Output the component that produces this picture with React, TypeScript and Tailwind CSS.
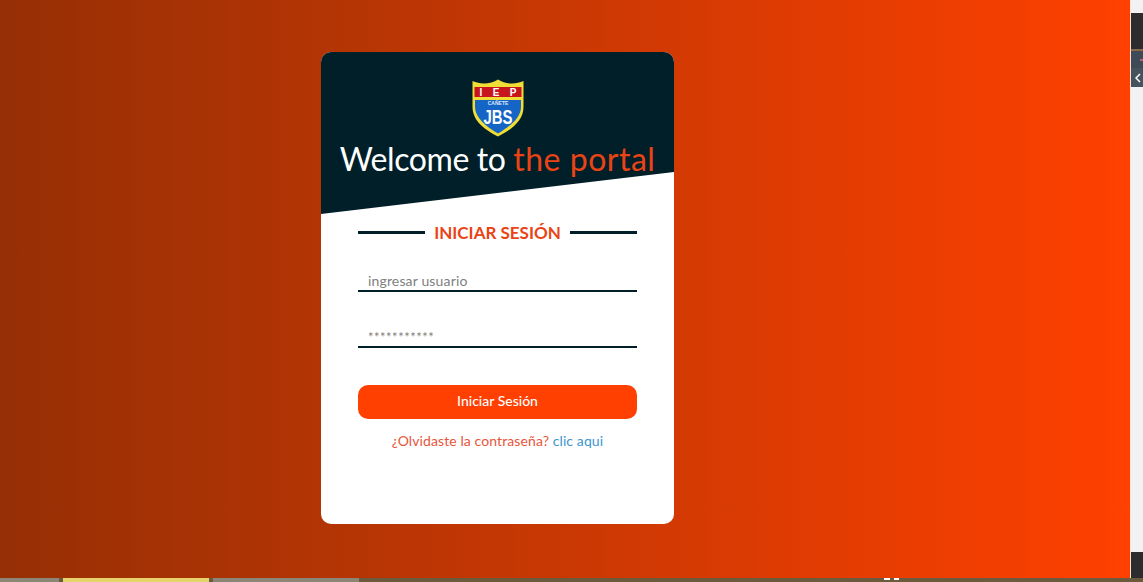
const FONT = "font-['Lato','Noto_Sans',sans-serif]";

const Shield = () => (
  <svg viewBox="0 0 54 58" className="w-[54px] h-[58px]">
    <path
      d="M27 0.500 C31 3 36 4.500 41 4.500 C45 4.500 49 3.500 52.500 2 L52.500 28 C52.500 42 40 51 27 57.500 C14 51 1.500 42 1.500 28 L1.500 2 C5 3.500 9 4.500 13 4.500 C18 4.500 23 3 27 0.500 Z"
      fill="#f0dd36"
    />
    <path d="M3.500 8 H50.500 V18 H3.500 Z" fill="#c8141c" />
    <path d="M4 21 H50 V28 C50 39 38 48 27 54.500 C16 48 4 39 4 28 Z" fill="#1565c6" />
    <text x="27" y="17" textAnchor="middle" fontSize="10" fontWeight="700" fill="#fff" fontFamily="Liberation Sans" textLength="37" lengthAdjust="spacing">
      IEP
    </text>
    <text x="27" y="25.500" textAnchor="middle" fontSize="5" fontWeight="700" fill="#dbe8ff" fontFamily="Liberation Sans">
      CAÑETE
    </text>
    <text
      textAnchor="middle"
      fontSize="16"
      fontWeight="700"
      fill="#fff"
      fontFamily="Liberation Sans"
      transform="translate(27 45) scale(1 1.250)"
      textLength="29"
      lengthAdjust="spacingAndGlyphs"
    >
      JBS
    </text>
  </svg>
);

export default function App() {
  return (
    <div className={`${FONT} h-[582px] w-[1143px] overflow-hidden flex flex-col bg-[#6b5b3c]`}>
      <div className="flex h-[578px]">
        {/* Page */}
        <main className="w-[1130px] bg-gradient-to-r from-[#962f05] to-[#ff4000] pt-[52px] pl-[321px]">
          <div className="w-[353px] h-[472px] rounded-[10px] bg-white overflow-hidden">
            <header className="h-[162px] bg-[#001f29] pt-[27px] flex flex-col items-center [clip-path:polygon(0_0,100%_0,100%_74%,0_100%)]">
              <Shield />
              <h1 className="mt-[3px] text-[32px] leading-[38px] tracking-[-0.4px] text-white whitespace-nowrap">
                Welcome to <span className="tracking-[0.5px] text-[#ea4315]">the portal</span>
              </h1>
            </header>

            <div className="px-[37px] pt-[6px]">
              <div className="flex items-center gap-[9px] h-[24px]">
                <div className="flex-1 h-[3px] bg-[#001f29]" />
                <h2 className="pt-[1px] text-[17px] leading-[24px] font-bold text-[#ea4315] whitespace-nowrap">INICIAR SESIÓN</h2>
                <div className="flex-1 h-[3px] bg-[#001f29]" />
              </div>

              <div className="mt-[27px] h-[21px] border-b-2 border-[#001f29] pl-[10px] text-[14px] leading-[20px] tracking-[0.15px] text-[#808080]">
                ingresar usuario
              </div>
              <div className="mt-[35px] h-[21px] border-b-2 border-[#001f29] pl-[10px] text-[13px] leading-[20px] tracking-[0.5px] text-[#808080]">
                ***********
              </div>

              <button className="mt-[37px] block w-full h-[34px] pb-[3px] rounded-[10px] bg-[#ff4000] text-white text-[14px] font-medium">
                Iniciar Sesión
              </button>

              <p className="mt-[13px] text-center text-[14px] leading-[18px] tracking-[0.1px] text-[#e8553a]">
                ¿Olvidaste la contraseña? <a className="text-[#3d94cf]">clic aqui</a>
              </p>
            </div>
          </div>
        </main>

        {/* Cropped neighbouring window */}
        <aside className="w-[13px] flex flex-col bg-[#f2f2f2] border-l border-[#fbe9e0]">
          <div className="h-[13px]" />
          <div className="h-[38px] bg-[#2d2d2d] border-b-2 border-[#8a6a4a]" />
          <div className="h-[17px] bg-[#3e4a55] flex items-center justify-end">
            <div className="w-[3px] h-[2px] bg-[#b0627a]" />
          </div>
          <div className="h-[19px] bg-[#46525c] flex items-center pl-[4px]">
            <svg viewBox="0 0 8 10" className="w-[8px] h-[10px]">
              <path d="M5 1 L1 5 L5 9" fill="none" stroke="#fff" strokeWidth="1.500" />
            </svg>
          </div>
          <div className="flex-1" />
          <div className="h-[26px] bg-[#2d2d2d]" />
        </aside>
      </div>

      {/* Taskbar edge */}
      <footer className="h-[4px] flex gap-[4px]">
        <div className="w-[59px] bg-[#8c8677]" />
        <div className="w-[146px] bg-[#e6d36c]" />
        <div className="w-[146px] bg-[#8c8677]" />
        <div className="ml-[521px] w-[6px] h-[2px] bg-white" />
        <div className="w-[5px] h-[2px] bg-white" />
      </footer>
    </div>
  );
}
